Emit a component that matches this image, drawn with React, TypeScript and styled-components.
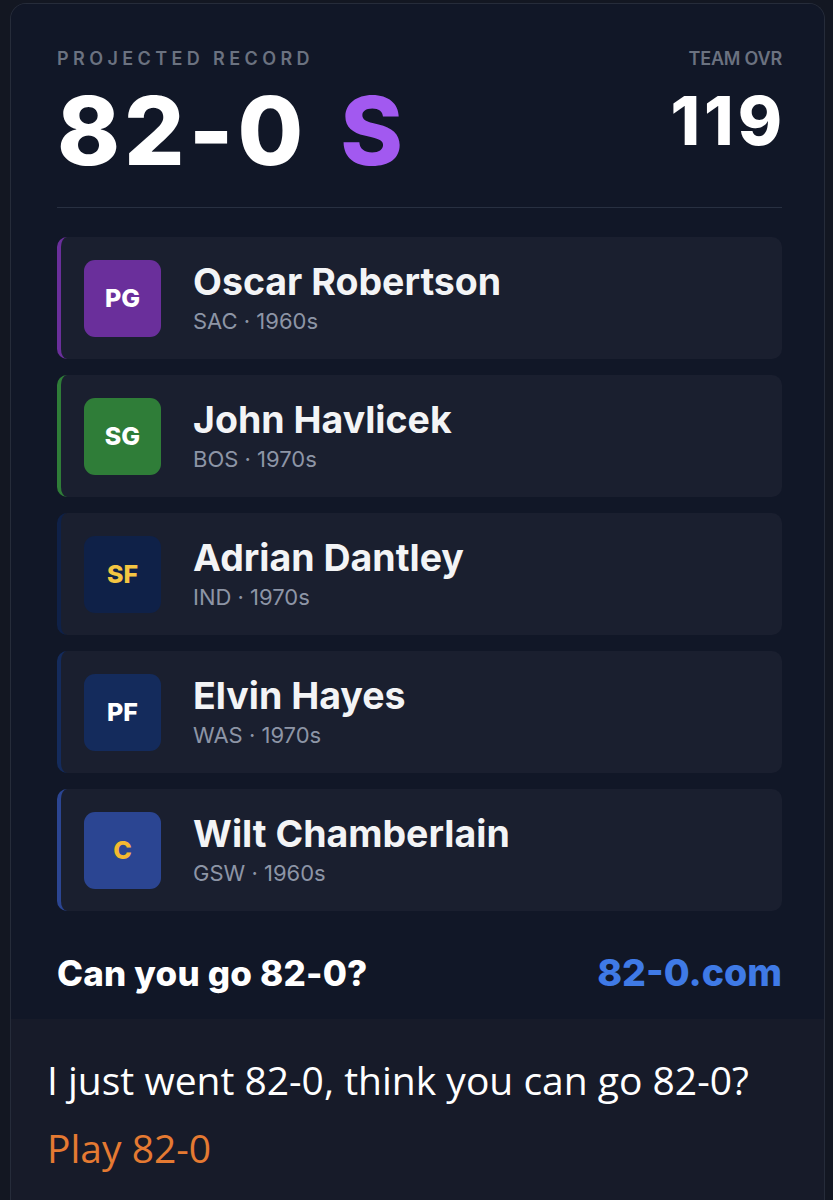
import React from "react";
import styled, { createGlobalStyle } from "styled-components";

const GlobalStyle = createGlobalStyle`
  html, body {
    margin: 0;
    padding: 0;
    background: #131722;
  }
  body {
    font-family: Inter, "Liberation Sans", sans-serif;
  }
`;

const Page = styled.div`
  width: 833px;
  height: 1200px;
  overflow: hidden;
  padding-top: 3px;
  box-sizing: border-box;
`;

const Frame = styled.div`
  margin: 0 8px 0 10px;
  border: 1px solid #262c3a;
  border-bottom: none;
  border-radius: 16px 16px 0 0;
  overflow: hidden;
  height: 1197px;
  background: #171b29;
`;

const Card = styled.div`
  background: #111727;
  padding: 43px 42px 0 46px;
  height: 1015px;
  box-sizing: border-box;
`;

const Header = styled.div`
  display: flex;
  justify-content: space-between;
  align-items: flex-start;
  padding-bottom: 26px;
  border-bottom: 1px solid #283041;
`;

const Stat = styled.div<{ $right?: boolean }>`
  display: flex;
  flex-direction: column;
  align-items: ${p => (p.$right ? "flex-end" : "flex-start")};
`;

const Label = styled.div<{ $spaced?: boolean }>`
  font-size: 18px;
  line-height: 24px;
  font-weight: 600;
  color: #6b7280;
  letter-spacing: ${p => (p.$spaced ? "4.4px" : "-0.2px")};
  text-transform: uppercase;
`;

const Record = styled.div`
  font-size: 95px;
  line-height: 100px;
  font-weight: 800;
  color: #ffffff;
  letter-spacing: 4px;
  margin-top: 10px;
`;

const Grade = styled.span`
  color: #a259f0;
  margin-left: 33px;
`;

const Ovr = styled.div`
  font-size: 67px;
  line-height: 80px;
  font-weight: 800;
  color: #ffffff;
  letter-spacing: 4px;
  margin-top: 10px;
  margin-right: -4px;
`;

const List = styled.div`
  display: flex;
  flex-direction: column;
  gap: 16px;
  margin-top: 29px;
`;

const Row = styled.div<{ $accent: string }>`
  display: flex;
  align-items: center;
  gap: 32px;
  height: 122px;
  box-sizing: border-box;
  padding-left: 23px;
  background: #1a1f2f;
  border-left: 4px solid ${p => p.$accent};
  border-radius: 10px;
`;

const Badge = styled.div<{ $bg: string; $fg: string }>`
  width: 77px;
  height: 77px;
  border-radius: 11px;
  background: ${p => p.$bg};
  color: ${p => p.$fg};
  display: flex;
  align-items: center;
  justify-content: center;
  font-size: 25px;
  font-weight: 800;
`;

const Info = styled.div`
  display: flex;
  flex-direction: column;
`;

const Name = styled.div`
  font-size: 37.5px;
  line-height: 42px;
  font-weight: 700;
  color: #f3f4f6;
`;

const Meta = styled.div`
  font-size: 22px;
  line-height: 28px;
  color: #8d95a6;
  margin-top: 4px;
`;

const Footer = styled.div`
  display: flex;
  justify-content: space-between;
  align-items: center;
  margin-top: 40px;
  line-height: 44px;
`;

const Tagline = styled.div`
  font-size: 35px;
  font-weight: 800;
  color: #ffffff;
  letter-spacing: 0.2px;
`;

const Site = styled.div`
  font-size: 37.5px;
  font-weight: 800;
  color: #3f7ae6;
`;

const Caption = styled.div`
  padding: 36px 36px 0 36px;
  font-family: "Open Sans", "Noto Sans", sans-serif;
`;

const Message = styled.div`
  font-size: 39px;
  line-height: 50px;
  color: #ffffff;
`;

const Link = styled.div`
  font-size: 39px;
  line-height: 50px;
  color: #e57a32;
  margin-top: 18px;
`;

type Player = {
  pos: string;
  name: string;
  team: string;
  era: string;
  accent: string;
  bg: string;
  fg: string;
};

const players: Player[] = [
  { pos: "PG", name: "Oscar Robertson", team: "SAC", era: "1960s", accent: "#6a2f9b", bg: "#6a2f9b", fg: "#ffffff" },
  { pos: "SG", name: "John Havlicek", team: "BOS", era: "1970s", accent: "#2f7d38", bg: "#2f7d38", fg: "#ffffff" },
  { pos: "SF", name: "Adrian Dantley", team: "IND", era: "1970s", accent: "#0f2148", bg: "#0f2148", fg: "#f4c542" },
  { pos: "PF", name: "Elvin Hayes", team: "WAS", era: "1970s", accent: "#142b5c", bg: "#142b5c", fg: "#ffffff" },
  { pos: "C", name: "Wilt Chamberlain", team: "GSW", era: "1960s", accent: "#2b4592", bg: "#2b4592", fg: "#f4b930" },
];

export default function App() {
  return (
    <Page>
      <GlobalStyle />
      <Frame>
        <Card>
          <Header>
            <Stat>
              <Label $spaced>Projected Record</Label>
              <Record>
                82-0<Grade>S</Grade>
              </Record>
            </Stat>
            <Stat $right>
              <Label>Team OVR</Label>
              <Ovr>119</Ovr>
            </Stat>
          </Header>
          <List>
            {players.map(p => (
              <Row key={p.pos} $accent={p.accent}>
                <Badge $bg={p.bg} $fg={p.fg}>
                  {p.pos}
                </Badge>
                <Info>
                  <Name>{p.name}</Name>
                  <Meta>
                    {p.team} · {p.era}
                  </Meta>
                </Info>
              </Row>
            ))}
          </List>
          <Footer>
            <Tagline>Can you go 82-0?</Tagline>
            <Site>82-0.com</Site>
          </Footer>
        </Card>
        <Caption>
          <Message>I just went 82-0, think you can go 82-0?</Message>
          <Link>Play 82-0</Link>
        </Caption>
      </Frame>
    </Page>
  );
}
